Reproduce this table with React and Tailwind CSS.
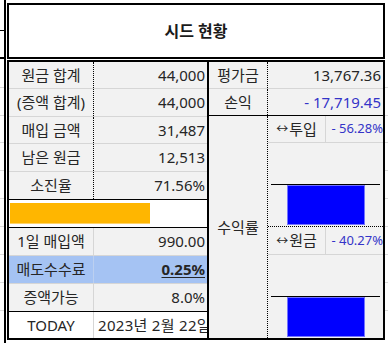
import React from "react";

const font = "font-['Noto_Sans','Noto_Sans_CJK_KR',sans-serif]";

const leftRows = [
  { label: "원금 합계", value: "44,000", h: "h-[27px]" },
  { label: "(증액 합계)", value: "44,000", h: "h-[28px]" },
  { label: "매입 금액", value: "31,487", h: "h-[27px]" },
  { label: "남은 원금", value: "12,513", h: "h-[28px]" },
];

const Label = ({ children, className = "" }) => (
  <div className={`flex items-center justify-center text-[15px] text-[#262626] whitespace-nowrap ${className}`}>
    {children}
  </div>
);

const Value = ({ children, blue, className = "" }) => (
  <div
    className={clsxLite(
      "flex-1 flex items-center justify-end pr-[2px] text-[15px] whitespace-nowrap overflow-hidden",
      blue ? "text-[#3434c8]" : "text-[#262626]",
      className
    )}
  >
    {children}
  </div>
);

function clsxLite(...parts) {
  return parts.filter(Boolean).join(" ");
}

const Bar = () => (
  <svg width="115" height="83" className="block">
    <line x1="3" x2="112" y1="41.5" y2="41.5" stroke="#000" strokeWidth="1" />
    <rect x="19.5" y="42.5" width="77" height="39" fill="#0000ff" stroke="#7474ff" strokeWidth="1" />
  </svg>
);

const RateRow = ({ label, value, h }) => (
  <div className={`flex ${h} border-b border-[#d6d6d6]`}>
    <div className="w-[58px] border-r border-[#d6d6d6] flex items-center justify-center text-[15px] text-[#262626] whitespace-nowrap">
      <span className="text-[12px] mr-[1px]">↔</span>
      {label}
    </div>
    <div className="flex-1 flex items-center justify-end text-[13px] text-[#3434c8] whitespace-nowrap overflow-hidden">
      - {value}
    </div>
  </div>
);

export default function App() {
  return (
    <div className={`w-[388px] h-[343px] bg-white overflow-hidden flex ${font}`}>
      {/* neighbouring cells on the left */}
      <div className="w-[6px] flex flex-col border-r-2 border-black">
        <div className="h-[31px] border-b border-black" />
        <div className="h-[28px] border-b-2 border-black" />
        <div className="h-[29px] border-b border-[#dadada]" />
        <div className="h-[28px] border-b border-[#dadada]" />
        <div className="h-[27px] border-b border-[#dadada]" />
        <div className="h-[28px] border-b border-[#dadada]" />
        <div className="h-[28px] border-b border-[#dadada]" />
        <div className="h-[28px] border-b border-[#dadada]" />
        <div className="h-[28px] border-b border-[#dadada]" />
        <div className="h-[28px] border-b border-[#dadada]" />
        <div className="h-[28px] border-b border-[#dadada]" />
      </div>

      <div className="ml-[1px] w-[378px] flex flex-col pt-[3px]">
        <div className="h-[56px] border-2 border-black bg-white flex items-center justify-center text-[16px] font-bold text-[#1a1a1a]">
          시드 현황
        </div>

        <div className="mt-[1px] h-[280px] border-2 border-black bg-[#f2f2f2] flex">
          {/* left block */}
          <div className="w-[200px] flex flex-col border-r-2 border-black">
            {leftRows.map((r) => (
              <div key={r.label} className={`flex ${r.h} border-b border-[#d6d6d6]`}>
                <Label className="w-[85px] border-r border-dotted border-black">{r.label}</Label>
                <Value>{r.value}</Value>
              </div>
            ))}
            <div className="flex h-[28px] border-b border-black">
              <Label className="w-[85px] border-r border-dotted border-black">소진율</Label>
              <Value>71.56%</Value>
            </div>
            <div className="h-[28px] border-b border-black bg-white pt-[3px] pl-[1px]">
              <div className="w-[140px] h-[21px] bg-[#ffb600] border-b border-[#ffd36a]" />
            </div>
            <div className="flex h-[28px] border-b border-[#d6d6d6]">
              <Label className="w-[85px] border-r border-[#d6d6d6]">1일 매입액</Label>
              <Value>990.00</Value>
            </div>
            <div className="flex h-[28px] border-b border-[#d6d6d6] bg-[#a5c3f3]">
              <Label className="w-[85px] border-r border-[#bcd0f0]">매도수수료</Label>
              <Value className="font-bold underline underline-offset-2">0.25%</Value>
            </div>
            <div className="flex h-[28px] border-b border-black">
              <Label className="w-[85px] border-r border-[#d6d6d6]">증액가능</Label>
              <Value>8.0%</Value>
            </div>
            <div className="flex h-[26px] bg-white">
              <Label className="w-[85px] border-r border-[#d6d6d6]">TODAY</Label>
              <div className="flex-1 flex items-center pl-[4px] text-[15px] tracking-[0.3px] text-[#262626] whitespace-nowrap overflow-hidden">
                2023년 2월 22일
              </div>
            </div>
          </div>

          {/* right block */}
          <div className="flex-1 flex flex-col">
            <div className="flex h-[27px] border-b border-[#d6d6d6]">
              <Label className="w-[59px] border-r border-dotted border-black">평가금</Label>
              <Value>13,767.36</Value>
            </div>
            <div className="flex h-[28px] border-b border-black">
              <Label className="w-[59px] border-r border-dotted border-black">손익</Label>
              <Value blue>- 17,719.45</Value>
            </div>
            <div className="flex flex-1">
              <Label className="w-[59px] border-r border-dotted border-black">수익률</Label>
              <div className="flex-1 flex flex-col">
                <RateRow label="투입" value="56.28%" h="h-[27px]" />
                <div className="h-[84px] border-b border-dotted border-black">
                  <Bar />
                </div>
                <RateRow label="원금" value="40.27%" h="h-[28px]" />
                <div className="flex-1">
                  <Bar />
                </div>
              </div>
            </div>
          </div>
        </div>
      </div>

      {/* neighbouring cells on the right */}
      <div className="flex-1 flex flex-col">
        <div className="h-[88px] border-b border-[#dadada]" />
        <div className="h-[28px] border-b border-[#dadada]" />
        <div className="h-[27px] border-b border-[#dadada]" />
        <div className="h-[28px] border-b border-[#dadada]" />
        <div className="h-[28px] border-b border-[#dadada]" />
        <div className="h-[28px] border-b border-[#dadada]" />
        <div className="h-[28px] border-b border-[#dadada]" />
        <div className="h-[28px] border-b border-[#dadada]" />
        <div className="h-[28px] border-b border-[#dadada]" />
      </div>
    </div>
  );
}
